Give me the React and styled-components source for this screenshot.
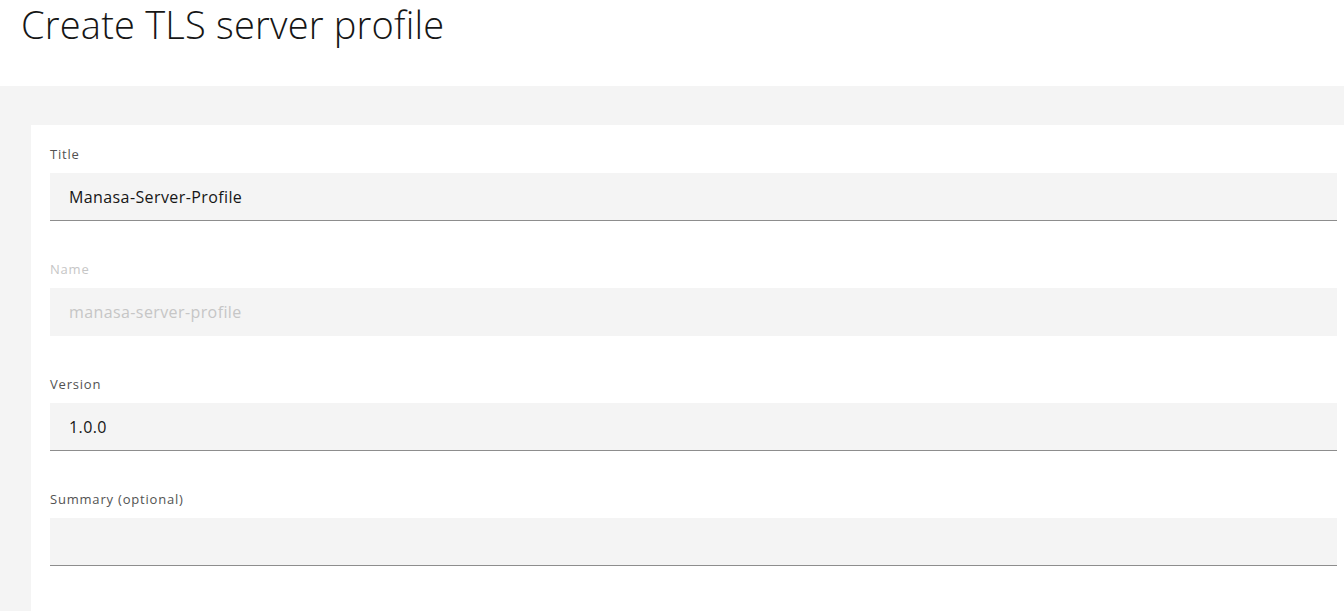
import React from "react";
import styled, { createGlobalStyle } from "styled-components";

const Global = createGlobalStyle`
  html, body { margin: 0; padding: 0; background: #ffffff; }
  body { font-family: "Open Sans", "Noto Sans", sans-serif; color: #161616; overflow: hidden; }
  * { box-sizing: border-box; }
`;

const Page = styled.div`
  display: flex;
  flex-direction: column;
  height: 611px;
`;

const Header = styled.header`
  height: 86px;
  padding: 0 0 0 21px;
  display: flex;
  align-items: flex-start;
`;

const Heading = styled.h1`
  margin: 0;
  font-size: 38px;
  line-height: 48px;
  letter-spacing: 0.2px;
  font-weight: 300;
  color: #161616;
`;

const Body = styled.main`
  flex: 1;
  background: #f4f4f4;
  padding: 39px 0 0 31px;
  display: flex;
`;

const Card = styled.section`
  flex: 1;
  background: #ffffff;
  padding: 20px 7px 0 19px;
  display: flex;
  flex-direction: column;
  gap: 39px;
`;

const Field = styled.div`
  display: flex;
  flex-direction: column;
  gap: 10px;
`;

const Label = styled.label`
  font-size: 13px;
  line-height: 18px;
  letter-spacing: 0.8px;
  color: ${(p) => (p.$disabled ? "#c6c6c6" : "#525252")};
`;

const Input = styled.input`
  height: 48px;
  width: 100%;
  border: none;
  border-bottom: 1px solid ${(p) => (p.disabled ? "transparent" : "#8d8d8d")};
  background: #f4f4f4;
  padding: 0 19px;
  font-family: inherit;
  font-size: 16px;
  letter-spacing: 0.4px;
  color: #161616;
  outline: none;
  &:disabled { color: #c6c6c6; -webkit-text-fill-color: #c6c6c6; opacity: 1; }
`;

const fields = [
  { label: "Title", value: "Manasa-Server-Profile" },
  { label: "Name", value: "manasa-server-profile", disabled: true },
  { label: "Version", value: "1.0.0" },
  { label: "Summary (optional)", value: "" },
];

export default function App() {
  return (
    <>
      <Global />
      <Page>
        <Header>
          <Heading>Create TLS server profile</Heading>
        </Header>
        <Body>
          <Card>
            {fields.map((f) => (
              <Field key={f.label}>
                <Label $disabled={f.disabled}>{f.label}</Label>
                <Input defaultValue={f.value} disabled={f.disabled} readOnly />
              </Field>
            ))}
          </Card>
        </Body>
      </Page>
    </>
  );
}
